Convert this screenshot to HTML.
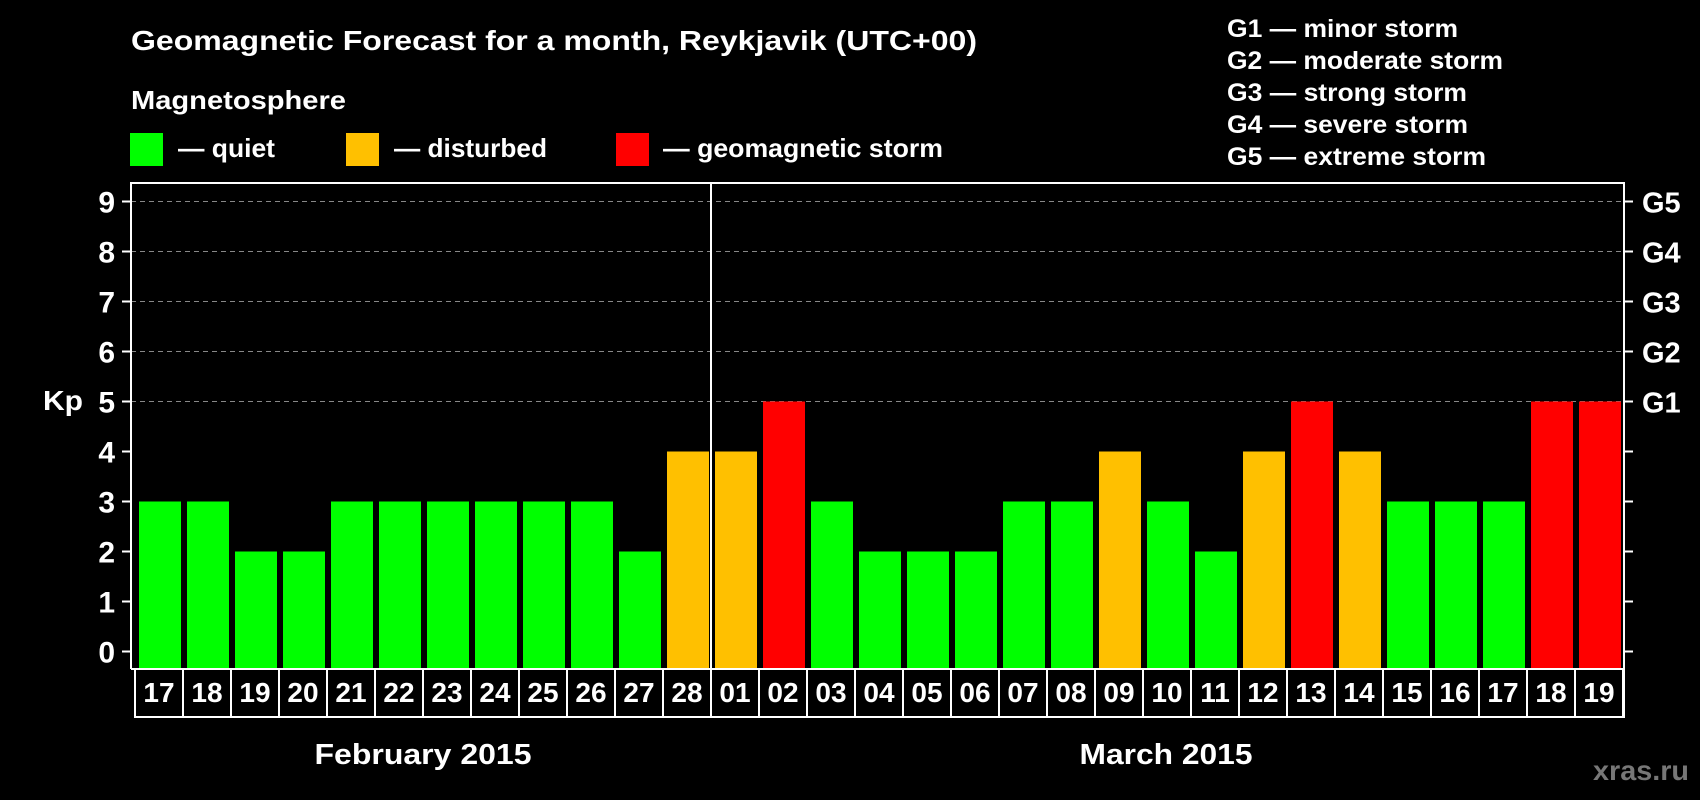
<!DOCTYPE html>
<html><head><style>body{margin:0;background:#000;}svg{display:block}</style></head><body>
<svg width="1700" height="800" xmlns="http://www.w3.org/2000/svg" font-family="Liberation Sans, Arial, sans-serif" font-weight="bold">
<rect width="1700" height="800" fill="#000"/>
<g fill="#fff">
<text x="131" y="50" font-size="28" textLength="846" lengthAdjust="spacingAndGlyphs">Geomagnetic Forecast for a month, Reykjavik (UTC+00)</text>
<text x="131" y="109" font-size="26" textLength="215" lengthAdjust="spacingAndGlyphs">Magnetosphere</text>
<text x="178" y="157" font-size="26" textLength="97" lengthAdjust="spacingAndGlyphs">— quiet</text>
<text x="394" y="157" font-size="26" textLength="153" lengthAdjust="spacingAndGlyphs">— disturbed</text>
<text x="663" y="157" font-size="26" textLength="280" lengthAdjust="spacingAndGlyphs">— geomagnetic storm</text>
<g font-size="25">
<text x="1227" y="37" textLength="231" lengthAdjust="spacingAndGlyphs">G1 — minor storm</text>
<text x="1227" y="69" textLength="276" lengthAdjust="spacingAndGlyphs">G2 — moderate storm</text>
<text x="1227" y="101" textLength="240" lengthAdjust="spacingAndGlyphs">G3 — strong storm</text>
<text x="1227" y="133" textLength="241" lengthAdjust="spacingAndGlyphs">G4 — severe storm</text>
<text x="1227" y="165" textLength="259" lengthAdjust="spacingAndGlyphs">G5 — extreme storm</text>
</g>
</g>
<rect x="130" y="133" width="33" height="33" fill="#00ff00"/>
<rect x="346" y="133" width="33" height="33" fill="#ffc000"/>
<rect x="616" y="133" width="33" height="33" fill="#ff0000"/>
<g stroke="#888" stroke-width="1" stroke-dasharray="5,4">
<line x1="131" y1="201.5" x2="1624" y2="201.5"/><line x1="131" y1="251.5" x2="1624" y2="251.5"/><line x1="131" y1="301.5" x2="1624" y2="301.5"/><line x1="131" y1="351.5" x2="1624" y2="351.5"/><line x1="131" y1="401.5" x2="1624" y2="401.5"/>
</g>
<g id="bars"></g>
<g stroke="#fff" stroke-width="2" fill="none">
<polyline points="131,669 131,183 1624,183 1624,669 131,669"/>
<line x1="711" y1="183" x2="711" y2="717"/>
<rect x="135" y="669" width="1489" height="48"/>
</g>
<g id="ticks" stroke="#fff" stroke-width="2"></g>
<g id="lbl" fill="#fff"></g>
<text x="43" y="410" font-size="28" fill="#fff" textLength="40" lengthAdjust="spacingAndGlyphs">Kp</text>
<text x="423" y="764" font-size="29" fill="#fff" text-anchor="middle" textLength="217" lengthAdjust="spacingAndGlyphs">February 2015</text>
<text x="1166" y="764" font-size="29" fill="#fff" text-anchor="middle" textLength="173" lengthAdjust="spacingAndGlyphs">March 2015</text>
<text x="1593" y="780" font-size="28" fill="#777" textLength="96" lengthAdjust="spacingAndGlyphs">xras.ru</text>
<script>
var ns="http://www.w3.org/2000/svg";
function el(p,t,a,txt){var e=document.createElementNS(ns,t);for(var k in a)e.setAttribute(k,a[k]);if(txt)e.textContent=txt;p.appendChild(e);}
var v=[3,3,2,2,3,3,3,3,3,3,2,4,4,5,3,2,2,2,3,3,4,3,2,4,5,4,3,3,3,5,5];
var d=[];for(var i=17;i<=28;i++)d.push(""+i);for(i=1;i<=19;i++)d.push((i<10?"0":"")+i);
var B=document.getElementById("bars"),T=document.getElementById("ticks"),L=document.getElementById("lbl");
for(i=0;i<31;i++){var x=135+i*48;var c=v[i]<=3?"#00ff00":(v[i]==4?"#ffc000":"#ff0000");
el(B,"rect",{x:x+4,y:651.5-50*v[i],width:42,height:668-(651.5-50*v[i]),fill:c});
el(T,"line",{x1:x+48,y1:669,x2:x+48,y2:717});
el(L,"text",{x:x+24,y:702,"font-size":28,"text-anchor":"middle"},d[i]);}
var G=["G1","G2","G3","G4","G5"];
for(var k=0;k<=9;k++){var y=651.5-50*k;
el(T,"line",{x1:122,y1:y,x2:131,y2:y});el(T,"line",{x1:1624,y1:y,x2:1633,y2:y});
el(L,"text",{x:115,y:y+11,"font-size":30,"text-anchor":"end"},""+k);
if(k>=5)el(L,"text",{x:1642,y:y+11,"font-size":29},G[k-5]);}
</script>
</svg>
</body></html>
